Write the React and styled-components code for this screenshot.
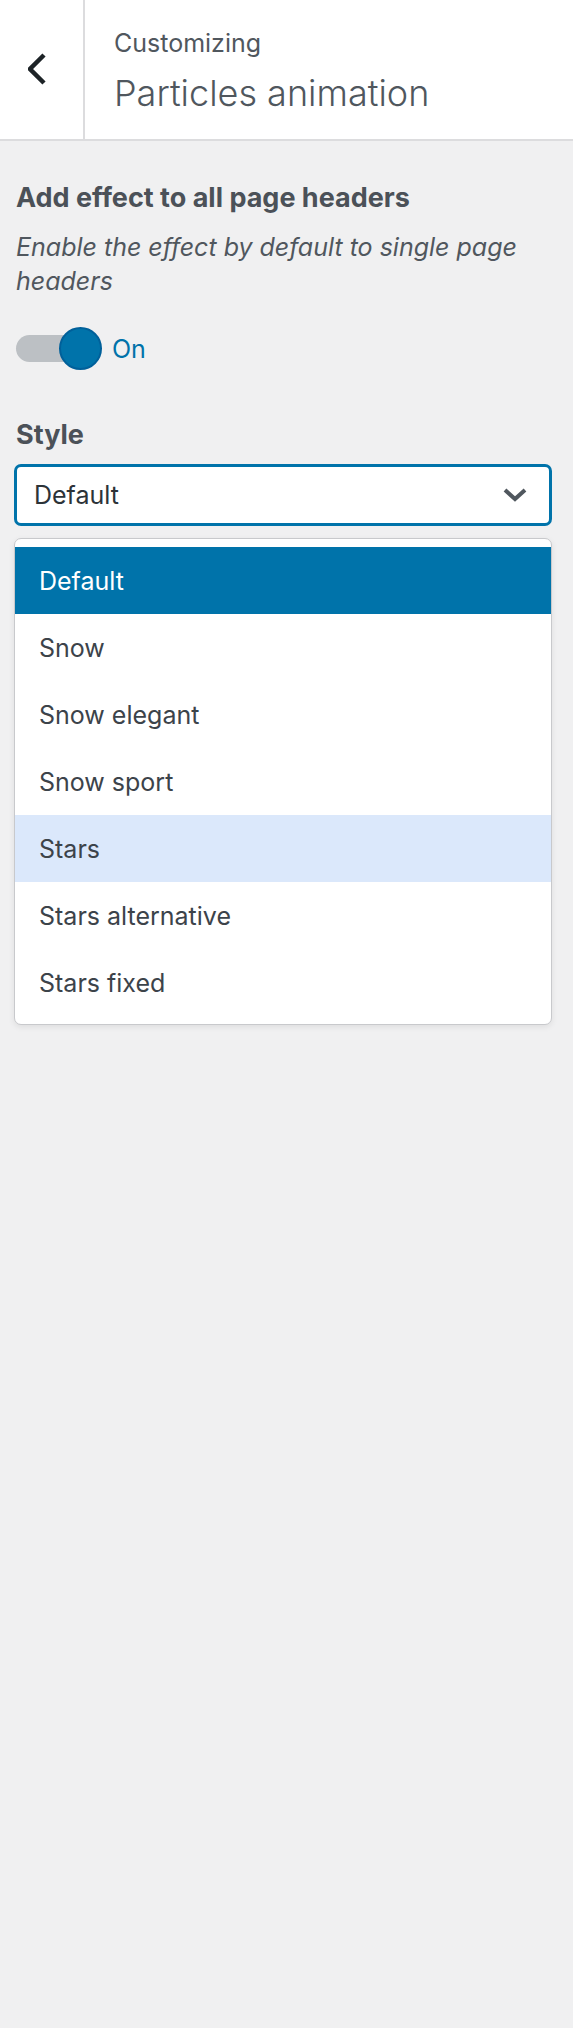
import React from 'react';
import styled, { createGlobalStyle } from 'styled-components';

const blue = '#0073aa';

const GlobalStyle = createGlobalStyle`
	html, body {
		margin: 0;
		padding: 0;
		background: #f0f0f1;
		font-family: Inter, "Noto Sans", sans-serif;
	}
`;

const Page = styled.div`
	min-height: 2028px;
	background: #f0f0f1;
`;

const Header = styled.header`
	display: flex;
	height: 139px;
	background: #fff;
	border-bottom: 2px solid #dcdcde;
`;

const BackButton = styled.button`
	width: 85px;
	flex: none;
	display: flex;
	align-items: center;
	justify-content: flex-start;
	padding: 0 0 2px 28px;
	background: #fff;
	border: none;
	border-right: 2px solid #dcdcde;
	cursor: pointer;
`;

const HeaderText = styled.div`
	padding: 28px 0 0 29px;
	color: #50575e;
`;

const Action = styled.div`
	font-size: 25px;
	line-height: 30px;
`;

const Title = styled.h3`
	margin: 13px 0 0;
	font-size: 36px;
	line-height: 44px;
	font-weight: 300;
`;

const Content = styled.div`
	padding: 40px 21px 0 16px;
`;

const ControlTitle = styled.div`
	font-size: 27px;
	line-height: 34px;
	font-weight: 700;
	color: #4b5158;
	margin-top: ${p => p.spaced ? '48px' : '0'};
`;

const Description = styled.p`
	margin: 15px 0 0;
	font-size: 25px;
	line-height: 34px;
	font-style: italic;
	color: #50575e;
`;

const ToggleRow = styled.label`
	display: flex;
	align-items: center;
	gap: 10px;
	margin-top: 29px;
	color: ${blue};
	font-size: 25px;
`;

const Switch = styled.span`
	position: relative;
	display: block;
	width: 86px;
	height: 43px;
`;

const Track = styled.span`
	position: absolute;
	left: 0;
	top: 8px;
	width: 76px;
	height: 27px;
	border-radius: 14px;
	background: #bcc0c4;
`;

const Knob = styled.span`
	position: absolute;
	right: 0;
	top: 0;
	width: 43px;
	height: 43px;
	box-sizing: border-box;
	border-radius: 50%;
	background: ${blue};
	border: 2px solid #00609a;
`;

const SelectBox = styled.div`
	display: flex;
	align-items: center;
	justify-content: space-between;
	box-sizing: border-box;
	height: 62px;
	margin: 12px 0 0 -2px;
	padding: 0 22px 0 17px;
	background: #fff;
	border: 3px solid ${blue};
	border-radius: 7px;
	font-size: 25px;
	color: #2c3338;
`;

const List = styled.ul`
	list-style: none;
	margin: 12px 0 0 -2px;
	padding: 8px 0;
	background: #fff;
	border: 1px solid #c8c9cc;
	border-radius: 7px;
	box-shadow: 0 2px 6px rgba(0, 0, 0, 0.08);
`;

const Option = styled.li`
	display: flex;
	align-items: center;
	height: 67px;
	padding: 0 24px;
	font-size: 25px;
	color: ${p => p.selected ? '#fff' : '#3c434a'};
	background: ${p => p.selected ? blue : p.hover ? '#dbe8fb' : 'transparent'};
`;

const options = ['Default', 'Snow', 'Snow elegant', 'Snow sport', 'Stars', 'Stars alternative', 'Stars fixed'];

const App = () => {
	return (
		<Page>
			<GlobalStyle />
			<Header>
				<BackButton aria-label="Back">
					<svg width="20" height="32" viewBox="0 0 20 32">
						<polyline points="16,2 2,16 16,30" fill="none" stroke="#1d2327" strokeWidth="4.5" />
					</svg>
				</BackButton>
				<HeaderText>
					<Action>Customizing</Action>
					<Title>Particles animation</Title>
				</HeaderText>
			</Header>
			<Content>
				<ControlTitle>Add effect to all page headers</ControlTitle>
				<Description>Enable the effect by default to single page headers</Description>
				<ToggleRow>
					<Switch>
						<Track />
						<Knob />
					</Switch>
					On
				</ToggleRow>
				<ControlTitle spaced>Style</ControlTitle>
				<SelectBox>
					Default
					<svg width="24" height="14" viewBox="0 0 24 14">
						<polyline points="2,2 12,11 22,2" fill="none" stroke="#50575e" strokeWidth="4" />
					</svg>
				</SelectBox>
				<List>
					{options.map(o => (
						<Option key={o} selected={o === 'Default'} hover={o === 'Stars'}>{o}</Option>
					))}
				</List>
			</Content>
		</Page>
	);
}

export default App;
